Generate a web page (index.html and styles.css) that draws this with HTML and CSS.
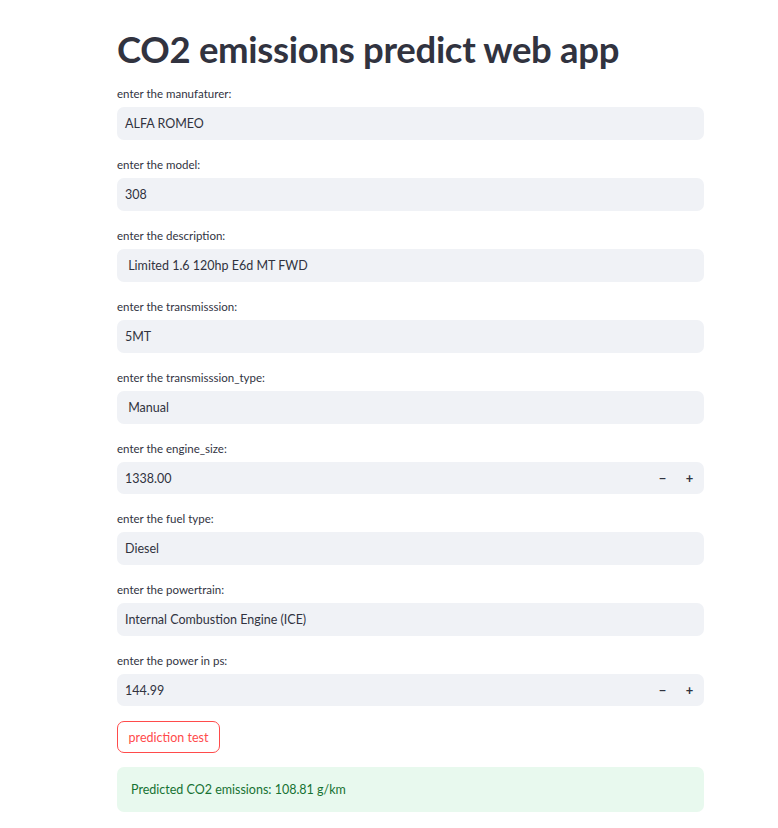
FILE: index.html
```html
<!DOCTYPE html>
<html>
<head>
<meta charset="utf-8">
<link rel="stylesheet" href="styles.css">
</head>
<body>
<main class="main">
  <h1 class="title">CO2 emissions predict web app</h1>
  <div class="fields">
    <div class="field">
      <label class="label">enter the manufaturer:</label>
      <div class="input"><span class="value">ALFA ROMEO</span></div>
    </div>
    <div class="field">
      <label class="label">enter the model:</label>
      <div class="input"><span class="value">308</span></div>
    </div>
    <div class="field">
      <label class="label">enter the description:</label>
      <div class="input"><span class="value">&nbsp;Limited 1.6 120hp E6d MT FWD</span></div>
    </div>
    <div class="field">
      <label class="label">enter the transmisssion:</label>
      <div class="input"><span class="value">5MT</span></div>
    </div>
    <div class="field">
      <label class="label">enter the transmisssion_type:</label>
      <div class="input"><span class="value">&nbsp;Manual</span></div>
    </div>
    <div class="field">
      <label class="label">enter the engine_size:</label>
      <div class="input number"><span class="value">1338.00</span>
        <span class="steps"><span class="step">&minus;</span><span class="step">+</span></span>
      </div>
    </div>
    <div class="field">
      <label class="label">enter the fuel type:</label>
      <div class="input"><span class="value">Diesel</span></div>
    </div>
    <div class="field">
      <label class="label">enter the powertrain:</label>
      <div class="input"><span class="value">Internal Combustion Engine (ICE)</span></div>
    </div>
    <div class="field">
      <label class="label">enter the power in ps:</label>
      <div class="input number"><span class="value">144.99</span>
        <span class="steps"><span class="step">&minus;</span><span class="step">+</span></span>
      </div>
    </div>
    <div class="actions">
      <button class="btn">prediction test</button>
    </div>
    <div class="success">Predicted CO2 emissions: 108.81 g/km</div>
  </div>
</main>
</body>
</html>
```
FILE: styles.css
```css
html, body {
  margin: 0;
  padding: 0;
  background: #ffffff;
}
body {
  font-family: "Source Sans Pro", Lato, "Noto Sans", sans-serif;
  color: #31333f;
}
.main {
  width: 587px;
  margin-left: 117px;
  padding-top: 26px;
}
.title {
  margin: 0 0 14px 0;
  font-size: 36.5px;
  line-height: 46px;
  font-weight: 700;
  color: #31333f;
  letter-spacing: -0.3px;
}
.fields {
  display: flex;
  flex-direction: column;
  gap: 17px;
}
.field {
  display: flex;
  flex-direction: column;
}
.label {
  font-size: 11.5px;
  line-height: 16px;
  margin-bottom: 5px;
  color: #31333f;
}
.input {
  height: 33px;
  background: #f0f2f6;
  border-radius: 7px;
  display: flex;
  align-items: center;
  padding: 0 8px;
  font-size: 12.5px;
  color: #31333f;
}
.value {
  flex: 1;
  white-space: pre;
}
.number {
  padding-right: 1px;
  height: 32px;
}
.steps {
  display: flex;
}
.step {
  width: 27px;
  text-align: center;
  font-weight: 700;
  font-size: 13px;
  color: #31333f;
}
.actions {
  margin-top: -2px;
  display: flex;
}
.btn {
  font-family: inherit;
  font-size: 12.5px;
  color: #ff4b4b;
  background: #ffffff;
  border: 1px solid #ff4b4b;
  border-radius: 7px;
  height: 32px;
  width: 103px;
  padding: 0;
}
.success {
  margin-top: -3px;
  height: 45px;
  box-sizing: border-box;
  background: #e8f9ee;
  border-radius: 7px;
  padding: 0 14px;
  display: flex;
  align-items: center;
  font-size: 12.5px;
  color: #177233;
}
```
